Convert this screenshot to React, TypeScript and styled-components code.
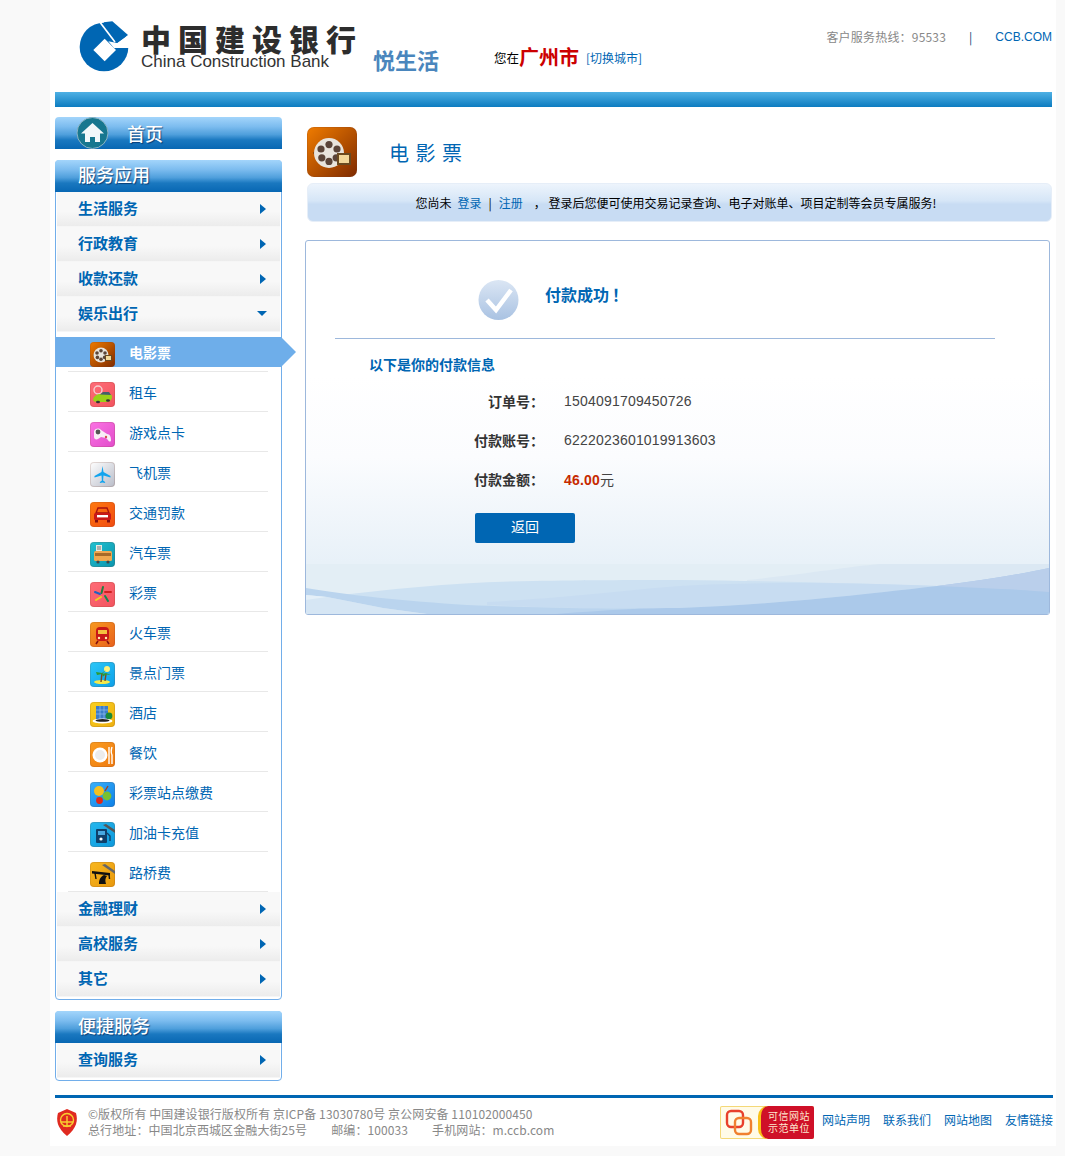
import React from 'react'
import styled, { createGlobalStyle } from 'styled-components'

const CJK = `"Noto Sans CJK SC", "Liberation Sans", sans-serif`
const BLUE = '#0066b3'

type IconKind =
  | 'film' | 'car' | 'game' | 'plane' | 'fine' | 'bus' | 'lottery'
  | 'train' | 'scenic' | 'hotel' | 'food' | 'station' | 'fuel' | 'toll'

const tiles: Record<IconKind, [string, string]> = {
  film: ['#f07c00', '#7e2a00'],
  car: ['#ff6d78', '#f2545f'],
  game: ['#fb74e4', '#e24ccb'],
  plane: ['#ffffff', '#b8bcc8'],
  fine: ['#ff7a10', '#f04a10'],
  bus: ['#22c0d0', '#0a95ae'],
  lottery: ['#ff6d78', '#f2545f'],
  train: ['#f79a20', '#e8601c'],
  scenic: ['#2cc8f8', '#0c9fe8'],
  hotel: ['#f8d020', '#eeb010'],
  food: ['#fa9c20', '#ee7a10'],
  station: ['#38b0fa', '#0c80e8'],
  fuel: ['#26b8ee', '#0c98dc'],
  toll: ['#f8b820', '#e8980c'],
}

const drawings: Record<IconKind, React.ReactNode> = {
  film: (
    <>
      <path d="M3 13l4-3v6z" fill="#3a2a20" />
      <circle cx="11" cy="13" r="7.5" fill="#e8e4dc" />
      <circle cx="11" cy="8.8" r="1.8" fill="#5a4438" />
      <circle cx="11" cy="17.2" r="1.8" fill="#5a4438" />
      <circle cx="7" cy="11" r="1.8" fill="#5a4438" />
      <circle cx="15" cy="11" r="1.8" fill="#5a4438" />
      <circle cx="7.4" cy="15.4" r="1.8" fill="#5a4438" />
      <circle cx="14.6" cy="15.4" r="1.8" fill="#5a4438" />
      <rect x="15" y="13" width="7" height="6" fill="#6a4a20" />
      <rect x="16" y="14" width="5" height="4" fill="#f2d89a" />
    </>
  ),
  car: (
    <>
      <circle cx="8" cy="8" r="4" fill="none" stroke="#f4d0d0" strokeWidth="1.4" />
      <path d="M3 17c1-3 4-5 8-5h6c3 0 5 0 5 3 0 3-3 5-7 5H7c-3 0-4-1-4-3z" fill="#9ad018" />
      <path d="M10 12.5l3-2.5h6l2 3z" fill="#44606a" />
      <ellipse cx="8" cy="20" rx="2" ry="1.2" fill="#333" />
      <ellipse cx="18" cy="18.5" rx="2" ry="1.2" fill="#333" />
    </>
  ),
  game: (
    <>
      <path d="M4 9c2-3 5-3 7-1l6 4c3 0 4 3 4 6 0 2-2 2-3 0l-2-2-5-1-3 2c-2 1-4 0-4-2z" fill="#f8eef6" />
      <circle cx="8" cy="10" r="2.4" fill="#555" />
      <circle cx="16" cy="15" r="1.2" fill="#d05050" />
    </>
  ),
  plane: (
    <path d="M12.5 4l1 6 7 4v1.5l-7-2-.4 5 2 1.6v1l-2.6-.6-2.6.6v-1l2-1.6-.4-5-7 2V14l7-4z" fill="#12a4ee" />
  ),
  fine: (
    <>
      <path d="M8 6h9l2 5H6z" fill="none" stroke="#a81010" strokeWidth="1.4" />
      <rect x="4" y="11" width="17" height="7" rx="1.5" fill="#c81818" />
      <rect x="7" y="13" width="11" height="2.4" fill="#fff" />
      <rect x="5" y="18" width="3" height="2.5" fill="#801010" />
      <rect x="17" y="18" width="3" height="2.5" fill="#801010" />
    </>
  ),
  bus: (
    <>
      <rect x="6" y="3" width="6" height="7" fill="#e8e8e0" />
      <path d="M7 5h4M7 7h4" stroke="#777" />
      <rect x="4" y="9" width="18" height="10" rx="1.5" fill="#f0a850" />
      <rect x="5" y="11" width="16" height="3" fill="#a86a28" />
      <circle cx="8" cy="20" r="1.6" fill="#444" />
      <circle cx="18" cy="20" r="1.6" fill="#444" />
    </>
  ),
  lottery: (
    <g strokeWidth="2" strokeLinecap="round">
      <path d="M13 5l-1.5 6" stroke="#208040" />
      <path d="M15 10h6" stroke="#d02020" />
      <path d="M15 14l3 5" stroke="#108850" />
      <path d="M11 15l-5 3" stroke="#f0d020" />
      <path d="M10 12l-5-2" stroke="#2060c0" />
    </g>
  ),
  train: (
    <>
      <rect x="6" y="5" width="13" height="14" rx="4" fill="#c81818" />
      <rect x="8" y="8" width="9" height="4" fill="#f4c040" />
      <circle cx="9" cy="16" r="1.2" fill="#fff0b0" />
      <circle cx="16" cy="16" r="1.2" fill="#fff0b0" />
      <path d="M8 19l-2 3M17 19l2 3" stroke="#801010" strokeWidth="1.6" />
    </>
  ),
  scenic: (
    <>
      <circle cx="17" cy="7" r="3" fill="#fff27a" />
      <ellipse cx="12" cy="20" rx="8" ry="2" fill="#f4e84a" />
      <path d="M11 20l1-9M15 19l1-7" stroke="#7a4a20" strokeWidth="1.4" />
      <path d="M6 10l6 1 4-3-4 4-5 1zM12 12l4-1 5 2-5-.5-3 2z" fill="#2e9a30" />
    </>
  ),
  hotel: (
    <>
      <rect x="6" y="4" width="12" height="14" fill="#3c7cc8" />
      <path d="M6 8h12M6 12h12M10 4v14M14 4v14" stroke="#8fc0ee" strokeWidth=".7" />
      <circle cx="19" cy="14" r="3.4" fill="#1a8a38" />
      <ellipse cx="12.5" cy="19" rx="10" ry="2.4" fill="#fff" />
      <ellipse cx="12.5" cy="18.4" rx="7" ry="1.4" fill="#222" />
    </>
  ),
  food: (
    <>
      <circle cx="10" cy="13" r="7.5" fill="#fff" />
      <circle cx="10" cy="13" r="5" fill="#ececec" />
      <path d="M19 5v17" stroke="#fff" strokeWidth="1.4" />
      <path d="M22 5c-1 3-1 6 0 8v9" stroke="#fff" strokeWidth="1.4" fill="none" />
    </>
  ),
  station: (
    <>
      <circle cx="9" cy="9" r="5" fill="#f4c020" />
      <circle cx="17" cy="14" r="4.4" fill="#7ac030" />
      <circle cx="9.5" cy="18.5" r="3.4" fill="#e02818" />
      <path d="M15 9l3-5" stroke="#a04020" strokeWidth="1.4" />
    </>
  ),
  fuel: (
    <>
      <path d="M16 2l9 6v3L13 3z" fill="#555" />
      <rect x="6" y="7" width="11" height="14" rx="1" fill="#10406a" />
      <rect x="8" y="9" width="7" height="4" fill="#48a8e0" />
      <circle cx="11" cy="17" r="1.6" fill="#fff" />
      <path d="M17 11l3 3v5" stroke="#10406a" strokeWidth="1.4" fill="none" />
    </>
  ),
  toll: (
    <>
      <path d="M15 2l10 7v3L12 3z" fill="#666" />
      <path d="M2 9l18 2v2.4L2 11.5z" fill="#111" />
      <path d="M9 22c0-4 1-7 5-9l3 1c-2 2-2 5-1 8z" fill="#111" />
      <path d="M5 11l1 6M19 12l.5 5" stroke="#111" strokeWidth="1.4" />
    </>
  ),
}

const Tile = styled.span<{ $from: string; $to: string; $size: number; $radius: number }>`
  display: block;
  flex: none;
  width: ${p => p.$size}px;
  height: ${p => p.$size}px;
  border-radius: ${p => p.$radius}px;
  background: linear-gradient(135deg, ${p => p.$from}, ${p => p.$to});
  box-shadow: inset 0 0 0 1px rgba(120, 60, 40, 0.18);

  svg {
    display: block;
    width: 100%;
    height: 100%;
  }
`

const ServiceIcon = ({ kind, size = 25, radius = 4 }: { kind: IconKind; size?: number; radius?: number }) => (
  <Tile $from={tiles[kind][0]} $to={tiles[kind][1]} $size={size} $radius={radius}>
    <svg viewBox="0 0 25 25">{drawings[kind]}</svg>
  </Tile>
)

const GlobalStyle = createGlobalStyle`
  html, body {
    margin: 0;
    padding: 0;
    background: #f9f9f9;
  }
  body {
    font-family: ${CJK};
    font-size: 12px;
    color: #333;
  }
`

const Page = styled.div`
  width: 1006px;
  height: 1146px;
  margin-left: 50px;
  margin-bottom: 10px;
  padding: 0 4px 0 5px;
  box-sizing: border-box;
  background: #fff;
  overflow: hidden;
`

const Header = styled.header`
  height: 92px;
  display: flex;
`

const LogoBlock = styled.div`
  flex: none;
  width: 281px;
  display: flex;
  align-items: flex-start;
  padding: 18px 0 0 20px;
  box-sizing: border-box;
`

const LogoMark = styled.svg`
  flex: none;
  width: 60px;
  height: 60px;
`

const LogoText = styled.div`
  flex: none;
  margin-left: 6px;
  padding-top: 5px;
`

const LogoCn = styled.div`
  font-size: 30px;
  line-height: 30px;
  font-weight: 900;
  color: #2d2d2d;
  letter-spacing: 7px;
  white-space: nowrap;
`

const LogoEn = styled.div`
  font-family: "Liberation Sans", sans-serif;
  font-size: 17px;
  line-height: 18px;
  color: #333;
  white-space: nowrap;
`

const Brand = styled.div`
  font-size: 22px;
  line-height: 28px;
  font-weight: 700;
  color: #4a86bd;
  margin: 45px 0 0 37px;
  white-space: nowrap;
`

const CityBox = styled.div`
  display: flex;
  align-items: center;
  height: 28px;
  margin: 42px 0 0 55px;
  white-space: nowrap;
`

const CityPrefix = styled.span`
  font-size: 12.5px;
  color: #000;
  margin-top: 3px;
`

const CityName = styled.span`
  font-size: 20px;
  font-weight: 700;
  color: #c00;
`

const CitySwitch = styled.a`
  font-size: 12px;
  color: ${BLUE};
  margin: 3px 0 0 7px;
`

const TopLinks = styled.div`
  margin: 28px 0 0 auto;
  height: 18px;
  line-height: 18px;
  display: flex;
  white-space: nowrap;
  color: #888;
  font-size: 12px;
`

const Hotline = styled.span`
  letter-spacing: 0.2px;
`

const TopSep = styled.span`
  margin: 0 23px;
  color: #0a3f73;
`

const TopLink = styled.a`
  font-family: "Liberation Sans", sans-serif;
  color: ${BLUE};
`

const NavBar = styled.div`
  height: 15px;
  background: linear-gradient(#4fb0e4, #0c7cc0);
`

const Columns = styled.div`
  display: flex;
  margin-top: 10px;
`

const Sidebar = styled.aside`
  flex: none;
  width: 227px;
`

const HomeBar = styled.div`
  height: 32px;
  box-sizing: border-box;
  padding-left: 21px;
  display: flex;
  align-items: center;
  gap: 18px;
  border-radius: 4px 4px 0 0;
  background: linear-gradient(#a3d5fb, #7cbcef 30%, #4f9fdc 55%, #1a78c0 72%, #0867b3);
`

const HomeIcon = styled.svg`
  width: 33px;
  height: 32px;
`

const HeadText = styled.span`
  font-size: 18px;
  line-height: 24px;
  font-weight: 500;
  color: #fff;
  text-shadow: 1px 1px 1px rgba(0, 40, 90, 0.7);
`

const Panel = styled.section`
  margin-top: 11px;
  border: 1px solid #72aeea;
  border-radius: 4px;
  padding-bottom: 2px;
  background: #fff;
`

const PanelHead = styled.div`
  height: 32px;
  box-sizing: border-box;
  margin: -1px -1px 0;
  padding: 0 0 4px 23px;
  display: flex;
  align-items: center;
  border-radius: 4px 4px 0 0;
  background: linear-gradient(#a3d5fb, #7cbcef 30%, #4f9fdc 55%, #1a78c0 72%, #0867b3);
`

const GroupRow = styled.div`
  height: 35px;
  box-sizing: border-box;
  margin: 0 1px;
  padding: 0 14px 5px 21px;
  display: flex;
  align-items: center;
  justify-content: space-between;
  font-size: 15px;
  font-weight: 700;
  color: ${BLUE};
  background: linear-gradient(#f8f8f8 55%, #ececec 97%, #fff);
`

const Caret = styled.span<{ $open?: boolean }>`
  width: 0;
  height: 0;
  margin-top: 3px;
  border-style: solid;
  ${p =>
    p.$open
      ? `border-width: 5px 5px 0 5px;
         border-color: ${BLUE} transparent transparent transparent;
         margin-right: -1px;`
      : `border-width: 5px 0 5px 6px;
         border-color: transparent transparent transparent ${BLUE};`}
`

const SubRow = styled.div`
  height: 40px;
  box-sizing: border-box;
  margin: 0 13px 0 12px;
  padding: 10px 0 0 22px;
  display: flex;
  gap: 14px;
  border-bottom: 1px solid #e8e8e8;
  position: relative;
  font-size: 14px;
  line-height: 21px;
  color: ${BLUE};
`

const ActiveBar = styled.div`
  position: absolute;
  left: -12px;
  right: -13px;
  top: 5px;
  height: 30px;
  background: #6eaeea;

  &::after {
    content: '';
    position: absolute;
    left: 100%;
    top: 0;
    border-style: solid;
    border-width: 15px 0 15px 15px;
    border-color: transparent transparent transparent #6eaeea;
  }
`

const SubLabel = styled.span<{ $active?: boolean }>`
  position: relative;
  ${p => p.$active && 'color: #fff; font-weight: 700;'}
`

const IconSlot = styled.span`
  position: relative;
`

const Main = styled.main`
  flex: none;
  width: 747px;
  margin-left: 23px;
`

const TitleRow = styled.div`
  margin: 11px 0 0 2px;
  height: 48px;
  display: flex;
  align-items: center;
  gap: 32px;
`

const TitleText = styled.h1`
  margin: 0;
  font-size: 20px;
  font-weight: 400;
  letter-spacing: 6.5px;
  color: ${BLUE};
`

const Notice = styled.div`
  margin: 7px 0 0 2px;
  height: 39px;
  box-sizing: border-box;
  padding-right: 7px;
  border: 1px solid #e6eef8;
  border-radius: 6px;
  display: flex;
  align-items: center;
  justify-content: center;
  gap: 6px;
  font-size: 12px;
  color: #000;
  white-space: nowrap;
  background: linear-gradient(#edf4fc, #d6e6f7 45%, #c8dcf3 55%, #c8dcf3);
`

const NoticeLink = styled.a`
  color: ${BLUE};
`

const NoticeSep = styled.span`
  margin: 0 1px;
`

const NoticeTail = styled.span`
  padding-left: 5px;
`

const Card = styled.section`
  margin-top: 18px;
  width: 745px;
  height: 375px;
  box-sizing: border-box;
  border: 1px solid #9db8dc;
  border-radius: 3px;
  position: relative;
  overflow: hidden;
  background: linear-gradient(#fff 36%, #fbfcfe 58%, #e8f1f8 86%);
`

const SuccessRow = styled.div`
  display: flex;
  gap: 26px;
  padding: 39px 0 0 172px;
  height: 58px;
`

const CheckIcon = styled.svg`
  flex: none;
  width: 41px;
  height: 40px;
`

const SuccessText = styled.h2`
  margin: 0;
  font-size: 16px;
  line-height: 28px;
  font-weight: 700;
  color: ${BLUE};
`

const Bang = styled.span`
  margin-left: 3px;
`

const Divider = styled.div`
  width: 660px;
  height: 1px;
  margin-left: 29px;
  background: #9db8dc;
`

const InfoTitle = styled.h3`
  margin: 15px 0 0 63px;
  font-size: 14px;
  line-height: 20px;
  font-weight: 700;
  color: ${BLUE};
`

const InfoList = styled.dl`
  margin: 7px 0 0;
  display: grid;
  grid-template-columns: 238px 1fr;
  grid-auto-rows: 39px;
  column-gap: 20px;
  align-items: center;
  font-size: 14px;
`

const InfoLabel = styled.dt`
  text-align: right;
  font-weight: 700;
  color: #333;
`

const InfoValue = styled.dd`
  margin: 0;
  font-family: "Liberation Sans", ${CJK};
  letter-spacing: 0.2px;
  color: #444;
`

const Amount = styled.strong`
  color: #c62a00;
`

const BackButton = styled.button`
  display: block;
  width: 100px;
  height: 30px;
  margin: 15px 0 0 169px;
  padding: 0 0 5px;
  border: 0;
  border-radius: 2px;
  background: ${BLUE};
  color: #fff;
  font-family: ${CJK};
  font-size: 14px;
`

const Wave = styled.svg`
  position: absolute;
  left: 0;
  bottom: 0;
  width: 100%;
  height: 50px;
  display: block;
`

const Footer = styled.footer`
  margin: 14px -1px 0 0;
  border-top: 3px solid ${BLUE};
  height: 47px;
  display: flex;
  align-items: flex-start;
`

const Emblem = styled.svg`
  flex: none;
  width: 22px;
  height: 27px;
  margin: 11px 10px 0 1px;
`

const Legal = styled.div`
  padding-top: 8px;
  font-size: 12px;
  line-height: 16px;
  color: #888;
  letter-spacing: 0.1px;
  white-space: nowrap;
`

const LegalGap = styled.span`
  margin-left: 24px;
`

const FooterRight = styled.div`
  margin-left: auto;
  padding-top: 8px;
  display: flex;
  align-items: center;
  gap: 13px;
`

const Badge = styled.div`
  width: 94px;
  height: 33px;
  margin-right: -5px;
  display: flex;
  border-radius: 2px;
  overflow: hidden;
  background: #fffbe8;
  box-shadow: inset 0 0 0 1px #f4d878;
`

const BadgeMark = styled.svg`
  flex: none;
  width: 38px;
  height: 33px;
`

const BadgeText = styled.div`
  flex: 1;
  padding: 4px 0 0 7px;
  background: #cf1028;
  border-left: 3px solid #f8c018;
  border-radius: 10px 0 0 10px;
  color: #fde8d0;
  font-size: 10px;
  line-height: 12px;
  letter-spacing: 0.5px;
  white-space: nowrap;
`

const FootLink = styled.a`
  font-size: 12px;
  color: ${BLUE};
  white-space: nowrap;
  padding-bottom: 6px;
`

const subItems: { kind: IconKind; label: string }[] = [
  { kind: 'film', label: '电影票' },
  { kind: 'car', label: '租车' },
  { kind: 'game', label: '游戏点卡' },
  { kind: 'plane', label: '飞机票' },
  { kind: 'fine', label: '交通罚款' },
  { kind: 'bus', label: '汽车票' },
  { kind: 'lottery', label: '彩票' },
  { kind: 'train', label: '火车票' },
  { kind: 'scenic', label: '景点门票' },
  { kind: 'hotel', label: '酒店' },
  { kind: 'food', label: '餐饮' },
  { kind: 'station', label: '彩票站点缴费' },
  { kind: 'fuel', label: '加油卡充值' },
  { kind: 'toll', label: '路桥费' },
]

const Group = ({ label, open }: { label: string; open?: boolean }) => (
  <GroupRow>
    {label}
    <Caret $open={open} />
  </GroupRow>
)

export default function App() {
  return (
    <>
      <GlobalStyle />
      <Page>
        <Header>
          <LogoBlock>
            <LogoMark viewBox="0 0 180 180">
              <circle cx="87" cy="87" r="73" fill={BLUE} />
              <polygon points="89,62 123,96 89,130 55,96" fill="#fff" />
              <polygon points="100,70 126,75 159,51 178,60 178,90 117,90" fill="#fff" />
              <path d="M76 14l44 58" stroke="#fff" strokeWidth="5" />
              <polygon points="86,13 112,10 159,51 126,75" fill={BLUE} />
            </LogoMark>
            <LogoText>
              <LogoCn>中国建设银行</LogoCn>
              <LogoEn>China Construction Bank</LogoEn>
            </LogoText>
          </LogoBlock>
          <Brand>悦生活</Brand>
          <CityBox>
            <CityPrefix>您在</CityPrefix>
            <CityName>广州市</CityName>
            <CitySwitch>[切换城市]</CitySwitch>
          </CityBox>
          <TopLinks>
            <Hotline>客户服务热线：95533</Hotline>
            <TopSep>|</TopSep>
            <TopLink>CCB.COM</TopLink>
          </TopLinks>
        </Header>
        <NavBar />
        <Columns>
          <Sidebar>
            <HomeBar>
              <HomeIcon viewBox="0 0 33 32">
                <circle cx="16.5" cy="16" r="15.5" fill="#17778f" stroke="#8db4c4" strokeWidth="1" />
                <path d="M16.5 6L5 16.5h4V25h5v-5h5v5h5v-8.5h4z" fill="#f2f8fa" />
              </HomeIcon>
              <HeadText>首页</HeadText>
            </HomeBar>
            <Panel>
              <PanelHead>
                <HeadText>服务应用</HeadText>
              </PanelHead>
              <Group label="生活服务" />
              <Group label="行政教育" />
              <Group label="收款还款" />
              <Group label="娱乐出行" open />
              {subItems.map((item, i) => (
                <SubRow key={item.label}>
                  {i === 0 && <ActiveBar />}
                  <IconSlot>
                    <ServiceIcon kind={item.kind} />
                  </IconSlot>
                  <SubLabel $active={i === 0}>{item.label}</SubLabel>
                </SubRow>
              ))}
              <Group label="金融理财" />
              <Group label="高校服务" />
              <Group label="其它" />
            </Panel>
            <Panel>
              <PanelHead>
                <HeadText>便捷服务</HeadText>
              </PanelHead>
              <Group label="查询服务" />
            </Panel>
          </Sidebar>
          <Main>
            <TitleRow>
              <ServiceIcon kind="film" size={50} radius={7} />
              <TitleText>电影票</TitleText>
            </TitleRow>
            <Notice>
              您尚未
              <NoticeLink>登录</NoticeLink>
              <NoticeSep>|</NoticeSep>
              <NoticeLink>注册</NoticeLink>
              <NoticeTail>，&nbsp;登录后您便可使用交易记录查询、电子对账单、项目定制等会员专属服务!</NoticeTail>
            </Notice>
            <Card>
              <SuccessRow>
                <CheckIcon viewBox="0 0 41 40">
                  <defs>
                    <linearGradient id="checkFill" x1="0" y1="0" x2="0" y2="1">
                      <stop offset="0" stopColor="#dbe6f4" />
                      <stop offset="1" stopColor="#a9c2e2" />
                    </linearGradient>
                  </defs>
                  <circle cx="20.5" cy="20" r="20" fill="url(#checkFill)" />
                  <path d="M9 20l9 10L33 10" fill="none" stroke="#fff" strokeWidth="4.5" />
                </CheckIcon>
                <SuccessText>
                  付款成功<Bang>！</Bang>
                </SuccessText>
              </SuccessRow>
              <Divider />
              <InfoTitle>以下是你的付款信息</InfoTitle>
              <InfoList>
                <InfoLabel>订单号：</InfoLabel>
                <InfoValue>1504091709450726</InfoValue>
                <InfoLabel>付款账号：</InfoLabel>
                <InfoValue>6222023601019913603</InfoValue>
                <InfoLabel>付款金额：</InfoLabel>
                <InfoValue>
                  <Amount>46.00</Amount>元
                </InfoValue>
              </InfoList>
              <BackButton>返回</BackButton>
              <Wave viewBox="0 0 743 50" preserveAspectRatio="none">
                <rect width="743" height="50" fill="#e3eef5" />
                <path d="M441 16C500 10 540 3 574 0H743V30H441Z" fill="#dbe8f3" />
                <path d="M21 33C90 24 160 18 227 17C280 16 340 16 374 16C480 17 560 20 631 22C680 24 720 26 743 28V50H21Z" fill="#cde1f2" />
                <path d="M181 38C260 34 320 26 374 22C440 18 540 18 631 22C510 36 450 41 374 44C300 45 240 44 181 41Z" fill="#c7dcf1" />
                <path d="M0 24C40 31 100 37 161 41C240 44 300 45 374 44L500 50H121L77 44L21 33L0 31Z" fill="#bad4ee" />
                <path d="M0 31L21 33L0 36Z" fill="#e4eff8" />
                <path d="M0 36L21 33L77 44L121 50H0Z" fill="#d6e6f4" />
                <path d="M250 50C300 46 340 44 374 44C450 41 510 36 631 22C680 16 720 9 743 4V50Z" fill="#abc9ea" />
                <path d="M631 22C680 16 720 9 743 4V28C720 26 680 24 631 22Z" fill="#bacfeb" />
              </Wave>
            </Card>
          </Main>
        </Columns>
        <Footer>
          <Emblem viewBox="0 0 22 27">
            <path d="M11 0l9 4c2 7 1 15-9 23C1 19 0 11 2 4z" fill="#e02a20" />
            <circle cx="11" cy="11" r="6.5" fill="none" stroke="#f8d030" strokeWidth="1.4" />
            <path d="M5 13h12M7 17h8M11 7v10" stroke="#f8d030" strokeWidth="1.4" />
          </Emblem>
          <Legal>
            ©版权所有 中国建设银行版权所有 京ICP备 13030780号 京公网安备 110102000450
            <br />
            总行地址：中国北京西城区金融大街25号
            <LegalGap>邮编：100033</LegalGap>
            <LegalGap>手机网站：m.ccb.com</LegalGap>
          </Legal>
          <FooterRight>
            <Badge>
              <BadgeMark viewBox="0 0 38 33">
                <g fill="none" strokeWidth="2.4">
                  <rect x="7" y="5" width="16" height="16" rx="4" stroke="#e8402c" />
                  <rect x="15" y="12" width="16" height="16" rx="4" stroke="#f08030" />
                </g>
              </BadgeMark>
              <BadgeText>
                可信网站
                <br />
                示范单位
              </BadgeText>
            </Badge>
            <FootLink>网站声明</FootLink>
            <FootLink>联系我们</FootLink>
            <FootLink>网站地图</FootLink>
            <FootLink>友情链接</FootLink>
          </FooterRight>
        </Footer>
      </Page>
    </>
  )
}
